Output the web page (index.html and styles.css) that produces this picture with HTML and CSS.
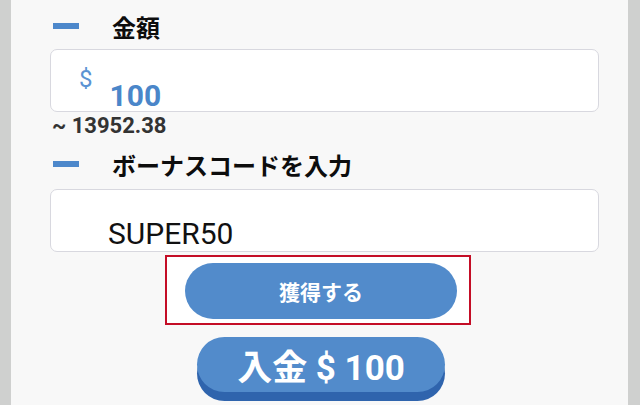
FILE: index.html
```html
<!DOCTYPE html>
<html lang="ja">
<head>
    <meta charset="UTF-8">
    <meta name="viewport" content="width=device-width, initial-scale=1.0">
    <title>入金</title>
    <link rel="stylesheet" href="styles.css">
</head>
<body>
    <div class="side"></div>

    <!-- Deposit form -->
    <div class="main">
        <div class="field-title">
            <span class="dash"></span>
            <span class="title-text">金額</span>
        </div>
        <div class="input-box amount-box">
            <span class="currency">$</span>
            <span class="amount">100</span>
        </div>
        <div class="converted">~ 13952.38</div>

        <div class="field-title second">
            <span class="dash"></span>
            <span class="title-text">ボーナスコードを入力</span>
        </div>
        <div class="input-box code-box">
            <span class="code">SUPER50</span>
        </div>

        <div class="highlight">
            <button class="claim-btn" type="button">獲得する</button>
        </div>

        <button class="deposit-btn" type="button">入金 $ 100</button>
    </div>

    <div class="side side-right"></div>
</body>
</html>
```

FILE: styles.css
```css
body {
    font-family: Roboto, "Noto Sans CJK JP", sans-serif;
    background-color: #f8f8f8;
    margin: 0;
    padding: 0;
    display: flex;
    height: 405px;
    overflow: hidden;
}
.side {
    width: 11px;
    background-color: #cfd0cf;
    flex: none;
}
.side-right {
    width: 12px;
}
.main {
    flex: 1;
    display: flex;
    flex-direction: column;
    align-items: flex-start;
    padding-top: 13px;
}
.field-title {
    display: flex;
    align-items: center;
    height: 28px;
    margin-left: 42px;
}
.field-title.second {
    margin-top: 15px;
}
.dash {
    width: 26px;
    height: 6px;
    background-color: #4d88cb;
    margin-top: -3px;
}
.title-text {
    font-family: "Noto Sans CJK JP", sans-serif;
    font-weight: 700;
    font-size: 24px;
    line-height: 28px;
    color: #0d0d0d;
    margin-left: 33px;
}
.input-box {
    margin-left: 39px;
    width: 549px;
    height: 63px;
    box-sizing: border-box;
    background-color: #fff;
    border: 1px solid #d8d8df;
    border-radius: 7px;
    display: flex;
    align-items: flex-start;
}
.amount-box {
    margin-top: 8px;
    padding-left: 28px;
}
.currency {
    font-size: 24px;
    line-height: 24px;
    color: #5b93d3;
    margin-top: 17px;
}
.amount {
    font-size: 30px;
    line-height: 30px;
    font-weight: 700;
    color: #4a86c9;
    margin-top: 31px;
    margin-left: 17px;
}
.converted {
    margin-left: 41px;
    margin-top: 3px;
    font-size: 22px;
    line-height: 21px;
    font-weight: 700;
    color: #333;
}
.code-box {
    margin-top: 10px;
    padding-left: 57px;
}
.code {
    font-size: 30px;
    color: #111;
    margin-top: 26px;
}
.highlight {
    margin-top: 3px;
    margin-left: 154px;
    width: 306px;
    height: 70px;
    box-sizing: border-box;
    border: 2px solid #c40d26;
    padding: 6px 13px 0 18px;
    background-color: #fff;
}
button {
    border: none;
    cursor: pointer;
    color: #fff;
    font-family: Roboto, "Noto Sans CJK JP", sans-serif;
    font-weight: 700;
    background-color: #528bcb;
    border-radius: 999px;
}
.claim-btn {
    width: 272px;
    height: 56px;
    font-size: 21px;
}
.deposit-btn {
    margin-top: 12px;
    margin-left: 186px;
    width: 248px;
    height: 55px;
    font-size: 35px;
    box-shadow: 0 9px 0 #2f64ad;
    padding: 0;
}
```
